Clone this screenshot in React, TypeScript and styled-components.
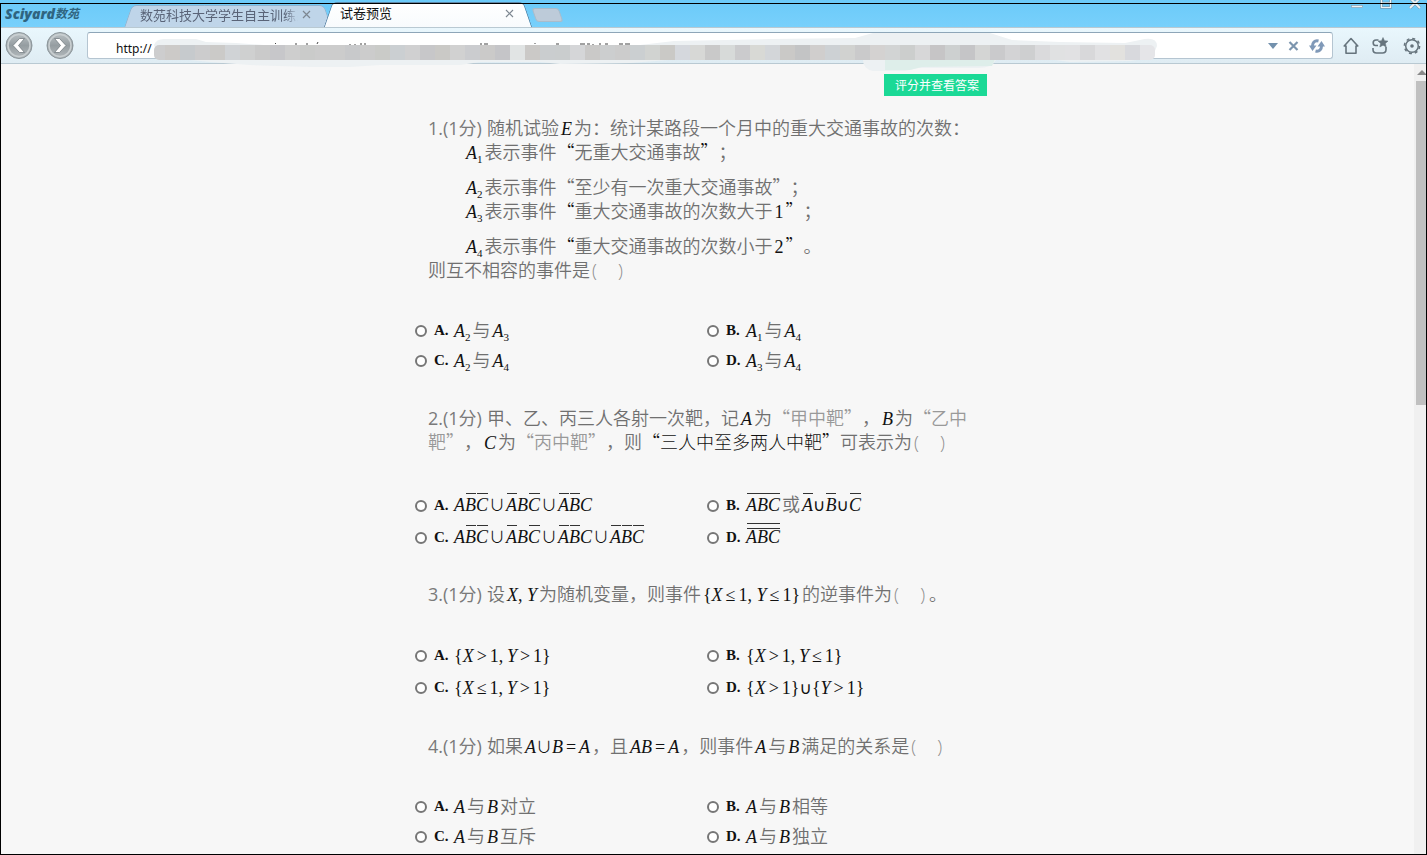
import React from "react";
import styled, { createGlobalStyle, css } from "styled-components";

const SANS = '"Open Sans", "Noto Sans CJK SC", sans-serif';
const CJK = '"Noto Sans CJK SC", sans-serif';
const SERIF = '"Liberation Serif", "Noto Sans CJK SC", serif';

const GlobalStyle = createGlobalStyle`
  * { box-sizing: border-box; }
  body { margin: 0; background: #f7f7f7; }
  button, input { font: inherit; }
`;

/* ---------- browser frame ---------- */

const Window = styled.div`
  position: relative;
  display: flex;
  flex-direction: column;
  height: 100vh;
  overflow: hidden;
  background: #f7f7f7;
  font-family: ${CJK};
  &::after {
    content: "";
    position: absolute;
    z-index: 5;
    inset: 3px 0 0 0;
    border: 1px solid #000;
    pointer-events: none;
  }
`;

const TitleBar = styled.header`
  display: flex;
  align-items: flex-end;
  height: 28px;
  flex: none;
  padding-left: 5px;
  background: linear-gradient(#6bcaf9, #78d0fb);
  border-bottom: 1px solid #b9c9d2;
`;

const Logo = styled.div`
  display: flex;
  align-items: center;
  width: 123px;
  height: 27px;
  color: #2f6480;
  font: italic 700 13px/26px "DejaVu Sans", "Noto Sans CJK SC", sans-serif;
  white-space: nowrap;
`;

const LogoLatin = styled.span`
  font-family: "Open Sans", sans-serif;
  font-size: 14px;
  font-weight: 800;
`;

const LogoHan = styled.span`
  font-size: 12px;
`;

const Tab = styled.div<{ $active?: boolean }>`
  position: relative;
  z-index: ${(p) => (p.$active ? 2 : 1)};
  display: flex;
  align-items: center;
  justify-content: space-between;
  width: 200px;
  height: ${(p) => (p.$active ? 25 : 22)}px;
  padding: 0 ${(p) => (p.$active ? 14 : 17)}px 3px 12px;
  color: ${(p) => (p.$active ? "#111" : "#5a6478")};
  font-size: 13px;
  &::before,
  &::after {
    content: "";
    position: absolute;
    z-index: -1;
    top: 0;
    bottom: 0;
    border: 1px solid ${(p) => (p.$active ? "#5f87a6" : "#8fb2cf")};
    border-bottom: 0;
    background: ${(p) => (p.$active ? "linear-gradient(#fff, #f8fbfd)" : "#bfd5e9")};
  }
  &::before {
    left: 0;
    right: 40%;
    border-right: 0;
    border-top-left-radius: 5px;
    transform: skewX(-19deg);
  }
  &::after {
    left: 40%;
    right: 0;
    border-left: 0;
    border-top-right-radius: 5px;
    transform: skewX(19deg);
  }
`;

const TabLabel = styled.span<{ $fade?: boolean }>`
  width: 158px;
  overflow: hidden;
  white-space: nowrap;
  line-height: 18px;
  ${(p) => p.$fade && css`
    flex: none;
    overflow: visible;
    mask-image: linear-gradient(to right, #000 145px, transparent 158px);
  `}
`;

const IconButton = styled.button`
  display: flex;
  align-items: center;
  justify-content: center;
  flex: none;
  padding: 0;
  border: 0;
  background: none;
`;

const NewTab = styled.button`
  align-self: center;
  width: 27px;
  height: 14px;
  margin: 2px 0 0 6px;
  padding: 0;
  border: 1px solid #a9bccb;
  border-radius: 3px;
  background: #bdcbd9;
  transform: skewX(19deg);
`;

const WindowControls = styled.div`
  align-self: flex-start;
  display: flex;
  gap: 17px;
  margin-left: auto;
  padding-right: 6px;
`;

const Toolbar = styled.div`
  display: flex;
  align-items: center;
  flex: none;
  height: 36px;
  padding: 0 6px 0 5px;
  background: linear-gradient(#e9f7fd, #dfecf3);
  border-bottom: 1px solid #b9c9d2;
`;

const NavButtons = styled.div`
  display: flex;
  gap: 13px;
  margin-right: 13px;
`;

const AddressBar = styled.div`
  position: relative;
  display: flex;
  align-items: center;
  gap: 10px;
  flex: 1;
  height: 27px;
  padding: 0 7px 0 28px;
  border: 1px solid #b5c5d1;
  border-top-color: #8ea6b8;
  border-radius: 3px;
  background: #fff;
`;

const AddressInput = styled.input`
  flex: 1;
  min-width: 0;
  height: 22px;
  margin-top: 6px;
  padding: 0;
  border: 0;
  outline: 0;
  background: transparent;
  color: #111;
  font-family: "Noto Sans", sans-serif;
  font-size: 12px;
`;

const Mosaic = styled.svg`
  position: absolute;
  left: 62px;
  top: -5px;
  z-index: 3;
  pointer-events: none;
`;

const ToolIcons = styled.div`
  display: flex;
  align-items: center;
  gap: 13px;
  margin-left: 10px;
`;

/* ---------- page ---------- */

const Viewport = styled.div`
  display: flex;
  flex: 1;
  min-height: 0;
  padding-right: 1px;
`;

const Page = styled.main`
  flex: 1;
  min-width: 0;
  overflow: hidden;
  padding-top: 10px;
`;

const ScrollTrack = styled.div`
  flex: none;
  width: 12px;
  padding-left: 2px;
  background: #f0f0f0;
`;

const ScrollArrow = styled.svg`
  display: block;
`;

const ScrollThumb = styled.div`
  height: 41%;
  background: #c0c0c0;
`;

const Paper = styled.form`
  display: flex;
  flex-direction: column;
  width: 584px;
  margin: 0 auto;
  color: #707070;
  font: 350 18px/24px ${SANS};
  text-spacing-trim: space-all;
`;

const GradeButton = styled.button`
  align-self: flex-end;
  height: 22px;
  margin: 0 12px 20px 0;
  padding: 0 8px 0 11px;
  border: 0;
  background: #1bd996;
  color: #fff;
  font: 12px/22px ${CJK};
`;

const Question = styled.fieldset`
  min-width: 0;
  margin: 0 0 30px;
  padding: 0;
  border: 0;
`;

const Stem = styled.div`
  margin-bottom: 34px;
  padding-left: 13px;
`;

const Line = styled.div<{ $indent?: boolean; $spaced?: boolean }>`
  height: 24px;
  margin-top: ${(p) => (p.$spaced ? 11 : 0)}px;
  padding-left: ${(p) => (p.$indent ? 36 : 0)}px;
  white-space: nowrap;
`;

const Mark = styled.span`
  margin-right: 5px;
  color: #7a7a7a;
  font-weight: 400;
`;

const Options = styled.div`
  display: grid;
  grid-template-columns: 1fr 1fr;
`;

const Option = styled.label<{ $tall?: boolean; $bars?: boolean }>`
  display: flex;
  align-items: center;
  height: ${(p) => (p.$tall ? 32 : 30)}px;
  padding-top: ${(p) => (p.$bars ? 3 : 0)}px;
  white-space: nowrap;
`;

const Radio = styled.input`
  appearance: none;
  flex: none;
  width: 12px;
  height: 12px;
  margin: 0 7px 0 0;
  border: 2px solid #767676;
  border-radius: 50%;
  background: #fff;
  &:checked {
    background: #767676;
  }
`;

const Letter = styled.b`
  width: 18px;
  padding-bottom: 2px;
  color: #111;
  font: 700 15px/24px ${SERIF};
`;

const ChoiceText = styled.span`
  padding-bottom: 3px;
`;

const Math = styled.span`
  padding: 0 2px;
  color: #111;
  font: 400 18px/0 ${SERIF};
`;

const Sub = styled.sub`
  font-size: 11px;
  line-height: 0;
  vertical-align: -4px;
`;

const Op = styled.span`
  padding: 0 3px;
`;

const Cup = styled.span<{ $pad?: boolean }>`
  padding: 0 ${(p) => (p.$pad ? 1 : 0)}px;
  font-family: ${CJK};
  font-size: 16px;
  font-weight: 350;
`;

const NarrowCup = styled.span`
  font-family: "DejaVu Sans", sans-serif;
  font-size: 17px;
`;

const Over = styled.span<{ $double?: boolean }>`
  position: relative;
  &::before {
    content: "";
    position: absolute;
    left: 1px;
    right: 0;
    top: ${(p) => (p.$double ? -4 : -2)}px;
    height: ${(p) => (p.$double ? 4 : 1)}px;
    border: solid #333;
    border-width: ${(p) => (p.$double ? "1px 0" : "1px 0 0")};
  }
`;

const Han = styled.span<{ $dark?: boolean; $light?: boolean }>`
  color: ${(p) => (p.$dark ? "#111" : p.$light ? "#999" : "inherit")};
  font-family: ${CJK};
  font-weight: ${(p) => (p.$dark ? 300 : 350)};
  line-height: 0;
`;

const Blank = styled.span`
  display: inline-flex;
  justify-content: space-between;
  width: 37px;
  padding: 0 4px 0 2px;
  color: #8c8c8c;
`;

const Answer = () => (
  <Blank>
    <span>(</span>
    <span>)</span>
  </Blank>
);

const A = ({ n }: { n?: number }) => (
  <>
    <i>A</i>
    {n !== undefined && <Sub>{n}</Sub>}
  </>
);

/* "A" plain, "A'" overlined, "u" wide union, "n" narrow union */
const Expr = ({ of }: { of: string }) => (
  <Math>
    {(of.match(/[un]|[A-Z]'?/g) || []).map((t, i) => {
      if (t === "u") return <Cup key={i} $pad>∪</Cup>;
      if (t === "n") return <NarrowCup key={i}>∪</NarrowCup>;
      if (t.length > 1) return <Over key={i}><i>{t[0]}</i></Over>;
      return <i key={i}>{t}</i>;
    })}
  </Math>
);

const Rel = ({ v, op }: { v: string; op: string }) => (
  <>
    <i>{v}</i>
    <Op>{op}</Op>1
  </>
);

const Both = ({ x, y }: { x: string; y: string }) => (
  <Math>
    {"{"}<Rel v="X" op={x} />{",\u2009"}<Rel v="Y" op={y} />{"}"}
  </Math>
);

type ChoicesProps = { name: string; items: React.ReactNode[]; tall?: boolean; bars?: boolean };

const Choices = ({ name, items, tall, bars }: ChoicesProps) => (
  <Options>
    {items.map((c, i) => (
      <Option key={i} $tall={tall} $bars={bars}>
        <Radio type="radio" name={name} />
        <Letter>{"ABCD"[i]}.</Letter>
        <ChoiceText>{c}</ChoiceText>
      </Option>
    ))}
  </Options>
);

const pair = (a: number, b: number) => (
  <>
    <Math><A n={a} /></Math>与<Math><A n={b} /></Math>
  </>
);

const relation = (word: string) => (
  <>
    <Math><i>A</i></Math>与<Math><i>B</i></Math>
    {word}
  </>
);

/* ---------- drawings ---------- */

const CloseGlyph = () => (
  <svg width="9" height="9" viewBox="0 0 9 9" stroke="#7d8791" strokeWidth="1.2">
    <path d="M1 1l7 7M8 1l-7 7" />
  </svg>
);

const RoundArrow = ({ forward }: { forward?: boolean }) => (
  <svg width="28" height="28" viewBox="0 0 28 28">
    <defs>
      <linearGradient id={forward ? "rf" : "rb"} x1="0" y1="0" x2="0" y2="1">
        <stop offset="0" stopColor="#bcc3c6" />
        <stop offset="0.5" stopColor="#959da1" />
        <stop offset="1" stopColor="#b4babd" />
      </linearGradient>
    </defs>
    <circle cx="14" cy="13.500" r="13" fill={forward ? "url(#rf)" : "url(#rb)"} stroke="#8c969b" />
    <circle cx="14" cy="13.500" r="11" fill="none" stroke="#c9cfd1" strokeWidth="1.600" />
    <g transform={forward ? "rotate(180 14 13.500)" : undefined}>
      <path d="M14.500 6.500H19.500l-6 7 6 7H14.500L8 13.500z" fill="#fff" stroke="#737c81" strokeWidth="0.800" />
    </g>
  </svg>
);

const TILES = [
  "#cdcdce", "#cccac8", "#c6cacd", "#cccccd", "#cbcac8", "#d0d3d6", "#cfd0d0", "#cacaca", "#c7c7ca", "#cecece",
  "#cacbca", "#cccccc", "#cccccc", "#c8c9cb", "#cccccc", "#cacbc8", "#cbcfd2", "#d0d0d1", "#c7c7c9", "#cac9c6",
  "#d1d1d1", "#cbcccf", "#cbcac9", "#c5c5c8", "#e1e4e4", "#cbc9c7", "#cacdcf", "#cacdce", "#d5d6d8", "#cac9c8",
  "#cccecf", "#cccccc", "#cbcfd1", "#d1d3d1", "#cac9c6", "#d5d8dd", "#d7d8d6", "#c9c9c9", "#d7dad9", "#cbcbcd",
  "#d8d9d5", "#d3d6d9", "#cac9c7", "#c3c4c5", "#d0cecd", "#cdd1d4", "#d1d2d0", "#cacacb", "#d4d2d1", "#d2d4d4",
  "#cccecd", "#d7d7d8", "#c6c5c6", "#cdd0d0", "#c5c5c7", "#d4d5d4", "#cacacc", "#d3d3d5", "#cecfd0", "#dadadc",
  "#e0e1e2", "#e1e1e3", "#d8d8da", "#e1e1e3", "#e2e1de", "#d8d9dd", "#e5e5e8",
];

const UrlMosaic = () => (
  <Mosaic width="1015" height="46" viewBox="150 28 1015 46" aria-hidden="true">
    <path
      d="M154 45Q156 39 164 39H196L206 42 236 43 264 45H640L674 41 770 39 855 38 873 33H990L1012 40 1060 42 1125 43 1140 40Q1157 36 1157 46L1152 58 1130 61 1070 62 1055 60H996Q992 68 978 68L918 68 905 71H873Q863 69 863 60H668L630 63 560 64 540 62H480L460 65H380L350 67 310 67 250 65 210 62 190 60H160z"
      fill="#edf1f3"
    />
    <path d="M885 59h110l-3 7-70 1-12 3h-25z" fill="#deeeea" />
    <clipPath id="smear">
      <rect x="154" y="45" width="1001" height="15" rx="5" />
    </clipPath>
    <g clipPath="url(#smear)" shapeRendering="crispEdges">
      {TILES.map((c, i) => (
        <rect key={i} x={150 + i * 15} y="45" width="15" height="15" fill={c} />
      ))}
    </g>
    <path
      d="M275 44l1-1M296 43v2M307 43v2M317 44l1-2M350 44v1M355 44v1M361 43v2M365 43v2M480 44h2M484 44h4M535 43v1M556 44h3M580 44h5M587 44h3M593 44v1M599 44h2M605 44h3M619 44h4M625 44h5"
      stroke="#444"
    />
  </Mosaic>
);

export default function App() {
  return (
    <>
      <GlobalStyle />
      <Window>
        <TitleBar>
          <Logo>
            <LogoLatin>Sciyard</LogoLatin>
            <LogoHan>数苑</LogoHan>
          </Logo>
          <Tab>
            <TabLabel $fade>数苑科技大学学生自主训练系</TabLabel>
            <IconButton aria-label="关闭"><CloseGlyph /></IconButton>
          </Tab>
          <Tab $active>
            <TabLabel>试卷预览</TabLabel>
            <IconButton aria-label="关闭"><CloseGlyph /></IconButton>
          </Tab>
          <NewTab aria-label="新标签页" />
          <WindowControls>
            <IconButton aria-label="最小化">
              <svg width="12" height="9" viewBox="0 0 12 9"><rect x="0.500" y="5.500" width="11" height="2" fill="#eef2f4" stroke="#8aa3b5" strokeWidth="0.700" /></svg>
            </IconButton>
            <IconButton aria-label="最大化">
              <svg width="12" height="9" viewBox="0 0 12 9"><path d="M1.500-1v8.500h9v-8.500M1.500 3h9" fill="none" stroke="#7e9bb0" strokeWidth="2.600" /><path d="M1.500-1v8.500h9v-8.500M1.500 3h9" fill="none" stroke="#eef2f4" strokeWidth="1.200" /></svg>
            </IconButton>
            <IconButton aria-label="关闭窗口">
              <svg width="12" height="9" viewBox="0 0 12 9"><path d="M1-2l10 10M11-2L1 8" fill="none" stroke="#7e9bb0" strokeWidth="3" /><path d="M1-2l10 10M11-2L1 8" fill="none" stroke="#eef2f4" strokeWidth="1.800" /></svg>
            </IconButton>
          </WindowControls>
        </TitleBar>

        <Toolbar>
          <NavButtons>
            <IconButton aria-label="后退"><RoundArrow /></IconButton>
            <IconButton aria-label="前进"><RoundArrow forward /></IconButton>
          </NavButtons>
          <AddressBar>
            <AddressInput aria-label="地址" defaultValue="http://" />
            <UrlMosaic />
            <IconButton aria-label="历史">
              <svg width="10" height="6" viewBox="0 0 10 6"><path d="M0 0h10L5 6z" fill="#7391ad" /></svg>
            </IconButton>
            <IconButton aria-label="停止">
              <svg width="11" height="10" viewBox="0 0 11 10" stroke="#7c95ae" strokeWidth="2.200"><path d="M1.500 1l8 8M9.500 1l-8 8" /></svg>
            </IconButton>
            <IconButton aria-label="刷新">
              <svg width="16" height="14" viewBox="0 0 16 14" fill="none" stroke="#8099b8" strokeWidth="3">
                <path d="M9.500 2C5.500 1 3.300 4 3.500 7.500M6.500 12c4 1 6.200-2 6-5.500" />
                <path d="M0 6.500h7.500L3.500 12zM16 7.500H8.500L12.500 2z" fill="#8099b8" stroke="none" />
              </svg>
            </IconButton>
          </AddressBar>
          <ToolIcons>
            <IconButton aria-label="主页">
              <svg width="16" height="18" viewBox="0 0 16 18" fill="none" stroke="#66747d" strokeWidth="1.600" strokeLinejoin="round">
                <path d="M8 1.500L1.200 9H3v7.200h10V9h1.800z" />
              </svg>
            </IconButton>
            <IconButton aria-label="收藏">
              <svg width="18" height="18" viewBox="0 0 18 18" fill="none" stroke="#66747d" strokeWidth="1.600">
                <path d="M6.500 3H4Q1.200 3 1.200 5.700T3.500 8.500H6M1 11v1.500q0 3.500 3.500 3.500h6q3.500 0 3.500-3.500V10" />
                <path d="M11 0.500l1.500 3.200 3.500.4-2.600 2.300.8 3.600-3.200-1.800-3.200 1.800.8-3.600L6 4.100l3.500-.4z" fill="#66747d" stroke="#66747d" strokeWidth="0.500" />
              </svg>
            </IconButton>
            <IconButton aria-label="设置">
              <svg width="18" height="18" viewBox="0 0 18 18" fill="none" stroke="#66747d">
                <circle cx="9" cy="9" r="6.300" strokeWidth="1.500" />
                <circle cx="9" cy="9" r="7.600" strokeWidth="1.500" strokeDasharray="3 2.970" />
                <circle cx="9" cy="9" r="1.800" fill="#66747d" stroke="none" />
              </svg>
            </IconButton>
          </ToolIcons>
        </Toolbar>

        <Viewport>
          <Page>
            <Paper>
              <GradeButton type="button">评分并查看答案</GradeButton>

              <Question>
                <Stem>
                  <Line><Mark>1.(1分)</Mark>随机试验<Math><i>E</i></Math>为：统计某路段一个月中的重大交通事故的次数：</Line>
                  <Line $indent><Math><A n={1} /></Math>表示事件<Han $dark>“</Han>无重大交通事故<Han $dark>”</Han>；</Line>
                  <Line $indent $spaced><Math><A n={2} /></Math>表示事件<Han>“</Han>至少有一次重大交通事故<Han>”</Han>；</Line>
                  <Line $indent><Math><A n={3} /></Math>表示事件<Han $dark>“</Han>重大交通事故的次数大于<Math>1</Math><Han $dark>”</Han>；</Line>
                  <Line $indent $spaced><Math><A n={4} /></Math>表示事件<Han $dark>“</Han>重大交通事故的次数小于<Math>2</Math><Han $dark>”</Han>。</Line>
                  <Line>则互不相容的事件是<Answer /></Line>
                </Stem>
                <Choices name="q1" items={[pair(2, 3), pair(1, 4), pair(2, 4), pair(3, 4)]} />
              </Question>

              <Question>
                <Stem>
                  <Line><Mark>2.(1分)</Mark>甲、乙、丙三人各射一次靶，记<Math><i>A</i></Math>为<Han $light>“甲中靶”</Han>，<Math><i>B</i></Math>为<Han $light>“乙中</Han></Line>
                  <Line><Han $light>靶”</Han>，<Math><i>C</i></Math>为<Han $light>“丙中靶”</Han>，则<Han $dark>“三人中至多两人中靶”</Han>可表示为<Answer /></Line>
                </Stem>
                <Choices
                  name="q2"
                  tall
                  bars
                  items={[
                    <Expr of="AB'C'uA'BC'uA'B'C" />,
                    <>
                      <Math><Over><i>ABC</i></Over></Math>或<Expr of="A'nB'nC'" />
                    </>,
                    <Expr of="AB'C'uA'BC'uA'B'CuA'B'C'" />,
                    <Math><Over $double><i>ABC</i></Over></Math>,
                  ]}
                />
              </Question>

              <Question>
                <Stem>
                  <Line>
                    <Mark>3.(1分)</Mark>设<Math><i>X</i>, <i>Y</i></Math>为随机变量，则事件
                    <Math>{"{"}<Rel v="X" op="≤" />, <Rel v="Y" op="≤" />{"}"}</Math>的逆事件为<Answer />。
                  </Line>
                </Stem>
                <Choices
                  name="q3"
                  tall
                  items={[
                    <Both x=">" y=">" />,
                    <Both x=">" y="≤" />,
                    <Both x="≤" y=">" />,
                    <Math>{"{"}<Rel v="X" op=">" />{"}"}<NarrowCup>∪</NarrowCup>{"{"}<Rel v="Y" op=">" />{"}"}</Math>,
                  ]}
                />
              </Question>

              <Question>
                <Stem>
                  <Line>
                    <Mark>4.(1分)</Mark>如果<Math><i>A</i><Cup>∪</Cup><i>B</i><Op>=</Op><i>A</i></Math>，且<Math><i>AB</i><Op>=</Op><i>A</i></Math>，则事件<Math><i>A</i></Math>与<Math><i>B</i></Math>满足的关系是<Answer />
                  </Line>
                </Stem>
                <Choices name="q4" items={[relation("对立"), relation("相等"), relation("互斥"), relation("独立")]} />
              </Question>
            </Paper>
          </Page>
          <ScrollTrack>
            <ScrollArrow width="10" height="17" viewBox="0 0 10 17"><path d="M1 11l5-5 5 5z" fill="#8a8a8a" /></ScrollArrow>
            <ScrollThumb />
          </ScrollTrack>
        </Viewport>
      </Window>
    </>
  );
}
